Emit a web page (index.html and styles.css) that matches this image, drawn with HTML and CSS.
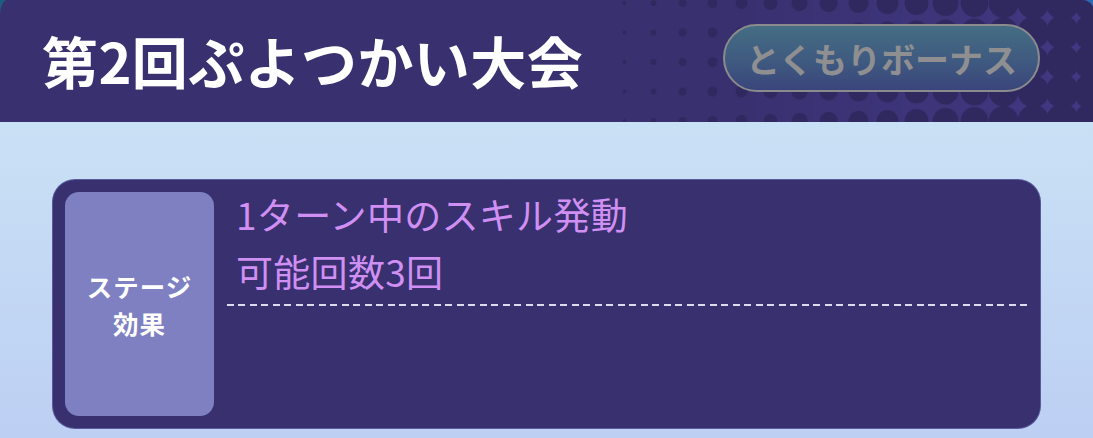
FILE: index.html
```html
<!DOCTYPE html>
<html lang="ja">
<head>
<meta charset="utf-8">
<title>第2回ぷよつかい大会</title>
<link rel="stylesheet" href="styles.css">
</head>
<body>
<div class="app">
  <header class="header">
    <div class="dots" aria-hidden="true">
      <span></span><span></span><span></span><span></span><span></span><span></span>
      <span></span><span></span><span></span><span></span><span></span><span></span>
      <span></span><span></span><span></span><span></span><span></span><span></span>
    </div>
    <h1 class="title">第2回ぷよつかい大会</h1>
    <div class="bonus">とくもりボーナス</div>
  </header>
  <main class="content">
    <section class="card">
      <div class="label">
        <span class="label-line">ステージ</span>
        <span class="label-line">効果</span>
      </div>
      <div class="effect">
        <p class="effect-text">1ターン中のスキル発動<br>可能回数3回</p>
        <div class="dash"></div>
      </div>
    </section>
  </main>
</div>
</body>
</html>
```
FILE: styles.css
```css
* { box-sizing: border-box; }
html, body { margin: 0; padding: 0; }
body {
  width: 1093px;
  height: 438px;
  overflow: hidden;
  font-family: "Noto Sans CJK JP", "Noto Sans", sans-serif;
}
.app {
  width: 1093px;
  height: 438px;
  display: flex;
  flex-direction: column;
  background: linear-gradient(90deg, #1c5e80 0%, #2a6cb6 100%);
}
.header {
  position: relative;
  height: 122px;
  flex: none;
  display: flex;
  align-items: center;
  justify-content: space-between;
  padding: 0 53px 0 42px;
  background: #38306f;
  border-top-left-radius: 7px 16px;
  border-top-right-radius: 11px 9px;
  overflow: hidden;
}
.dots {
  position: absolute;
  left: 610px;
  top: 0;
  bottom: 0;
  display: flex;
}
.dots span {
  flex: none;
  width: 29.2px;
  height: 100%;
  --r: 1px;
  --bg: transparent;
  background:
    radial-gradient(circle, #30295f var(--r), transparent calc(var(--r) + 1px)) center -11.75px / 29.2px 29.5px repeat-y,
    var(--bg);
}
.dots span:nth-child(1) { --r: 1.5px; }
.dots span:nth-child(2) { --r: 2.5px; }
.dots span:nth-child(3) { --r: 3.5px; }
.dots span:nth-child(4) { --r: 4.5px; }
.dots span:nth-child(5) { --r: 5.5px; --bg: #39316f; }
.dots span:nth-child(6) { --r: 6.5px; --bg: #3a3172; }
.dots span:nth-child(7) { --r: 7.5px; --bg: #3a3273; }
.dots span:nth-child(8) { --r: 8.5px; --bg: #3b3375; }
.dots span:nth-child(9) { --r: 9.5px; --bg: #3c3377; }
.dots span:nth-child(10) { --r: 10.5px; --bg: #3c3478; }
.dots span:nth-child(11) { --r: 11.5px; --bg: #3d3479; }
.dots span:nth-child(12) { --r: 12.5px; --bg: #3d357a; }
.dots span:nth-child(13) { --r: 13.5px; --bg: #3e357c; }
.dots span:nth-child(14) { --r: 14.5px; --bg: #3f367e; }
.dots span:nth-child(15) { --r: 15.5px; --bg: #3f3780; }
.dots span:nth-child(16) { --r: 16.5px; --bg: #403882; }
.dots span:nth-child(17) { --r: 17.5px; --bg: #403882; }
.dots span:nth-child(18) { --r: 18px; --bg: #403882; }
.title {
  position: relative;
  margin: -2px 0 0 0;
  font-size: 56px;
  line-height: 1;
  font-weight: 700;
  color: #ffffff;
  letter-spacing: 0.4px;
}
.bonus {
  position: relative;
  width: 317px;
  height: 68px;
  margin-top: -6px;
  display: flex;
  align-items: center;
  justify-content: center;
  border: 2px solid #8b8b8d;
  border-radius: 34px;
  background: linear-gradient(180deg, #446d83 0%, #3f5a80 55%, #3a457b 100%);
  color: #8f8f92;
  font-size: 34px;
  font-weight: 700;
  letter-spacing: 0;
}
.content {
  flex: 1;
  padding: 58px 53px 0 53px;
  background: linear-gradient(180deg, #c9e1f5 0%, #bdcff3 100%);
}
.card {
  height: 248px;
  display: flex;
  padding: 12px;
  background: #38306f;
  border-radius: 22px;
  box-shadow: 0 0 0 1px #5a5a9a;
}
.label {
  flex: none;
  width: 149px;
  display: flex;
  flex-direction: column;
  align-items: center;
  justify-content: center;
  background: #7e80c2;
  border-radius: 14px;
  color: #ffffff;
  font-weight: 700;
  font-size: 25.5px;
  line-height: 37px;
}
.label-line {
  display: block;
  letter-spacing: 1px;
}
.effect {
  flex: 1;
  margin: 0 0 0 13px;
  display: flex;
  flex-direction: column;
}
.effect-text {
  margin: -6px 0 0 0;
  padding-left: 9px;
  color: #d08ff2;
  font-size: 37px;
  line-height: 57px;
  font-weight: 400;
  letter-spacing: 0.3px;
}
.dash {
  margin-top: 4px;
  height: 2px;
  background: repeating-linear-gradient(90deg, #dcdcef 0 7px, transparent 7px 11.5px);
}
```
